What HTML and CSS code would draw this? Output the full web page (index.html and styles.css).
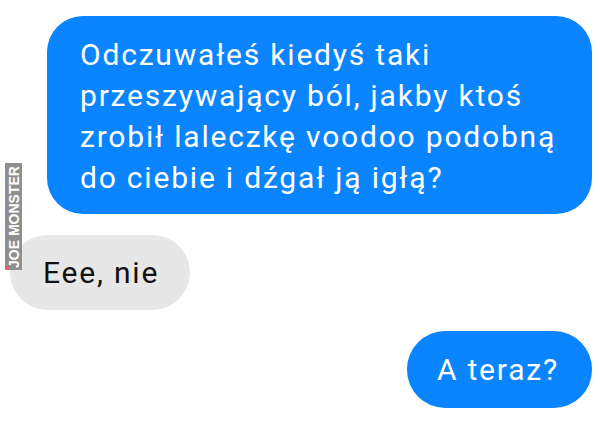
FILE: index.html
```html
<!DOCTYPE html>
<html>

<head>
    <title>Messenger</title>
    <link rel="stylesheet" href="styles.css">
</head>

<body>
    <div class="chat">
        <div class="msg msg-out msg-long">
            Odczuwałeś kiedyś taki<br>
            przeszywający ból, jakby ktoś<br>
            zrobił laleczkę voodoo podobną<br>
            do ciebie i dźgał ją igłą?
        </div>

        <div class="msg msg-in">Eee, nie</div>

        <div class="msg msg-out msg-short">A teraz?</div>
    </div>

    <div class="watermark">
        <span class="watermark-dot"></span>
        <span class="watermark-text">JOE MONSTER</span>
    </div>
</body>

</html>
```

FILE: styles.css
```css
body {
    font-family: Roboto, "Liberation Sans", Arial, sans-serif;
    background-color: #fff;
    margin: 0;
    padding: 0;
    width: 600px;
    height: 433px;
    overflow: hidden;
    position: relative;
}

.chat {
    display: flex;
    flex-direction: column;
    align-items: flex-start;
    gap: 21px;
    padding: 16px 8px 0 10px;
}

.msg {
    font-size: 30px;
    line-height: 41px;
    letter-spacing: 1.8px;
    border-radius: 38px;
    white-space: nowrap;
}

.msg-out {
    align-self: flex-end;
    background-color: #0a84ff;
    color: #fff;
}

.msg-long {
    width: 512px;
    padding: 18px 0 16px 33px;
    border-radius: 36px;
}

.msg-short {
    padding: 18px 33px 18px 30px;
}

.msg-in {
    background-color: #e7e7e7;
    color: #111;
    padding: 17px 31px 17px 33px;
}

.watermark {
    position: absolute;
    left: 5px;
    top: 163px;
    width: 17px;
    height: 107px;
    background-color: #8f8f8f;
}

.watermark-text {
    position: absolute;
    left: 50%;
    top: 50%;
    transform: translate(-50%, -50%) rotate(-90deg);
    color: #fff;
    font-family: "Liberation Sans", Arial, sans-serif;
    font-weight: bold;
    font-size: 14px;
    white-space: nowrap;
}

.watermark-dot {
    position: absolute;
    left: 0;
    bottom: 0;
    width: 4px;
    height: 4px;
    background-color: #e0607a;
}
```
